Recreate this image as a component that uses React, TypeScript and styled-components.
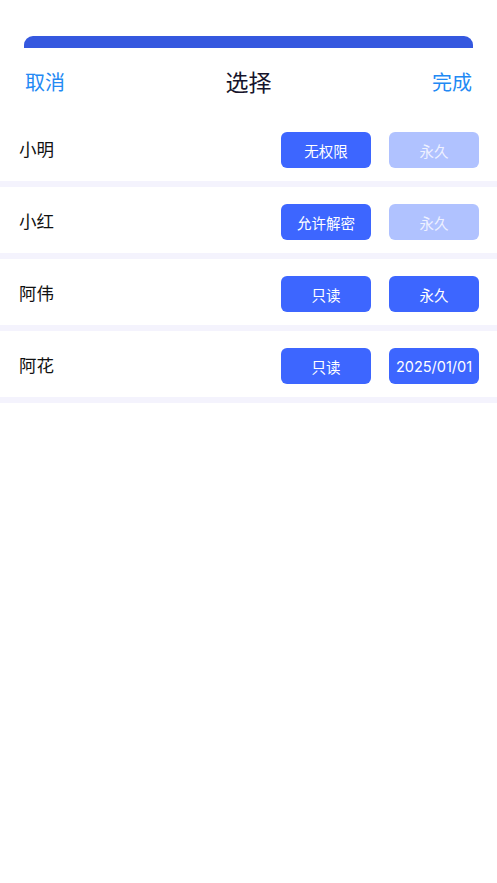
import React, { useState } from "react";
import styled, { createGlobalStyle } from "styled-components";

const GlobalStyle = createGlobalStyle`
  html, body {
    margin: 0;
    padding: 0;
    background: #ffffff;
    font-family: "Noto Sans CJK SC", "Noto Sans", "Liberation Sans", sans-serif;
  }
`;

const Page = styled.div`
  width: 100%;
  min-height: 883px;
  background: #ffffff;
  padding-top: 36px;
  box-sizing: border-box;
`;

const TopBar = styled.div`
  height: 12px;
  margin: 0 24px;
  background: #3558df;
  border-radius: 9px 9px 0 0;
`;

const Header = styled.div`
  display: flex;
  align-items: center;
  justify-content: space-between;
  height: 66px;
  padding: 0 25px;
  margin-bottom: 1px;
`;

const HeaderBtn = styled.button`
  border: none;
  background: none;
  padding: 0;
  font-family: inherit;
  font-size: 20px;
  font-weight: 400;
  color: #2289f4;
  cursor: pointer;
`;

const Title = styled.div`
  font-size: 23px;
  font-weight: 400;
  color: #16142b;
`;

const List = styled.div`
  display: flex;
  flex-direction: column;
`;

const Row = styled.div`
  display: flex;
  align-items: center;
  height: 72px;
  padding: 4px 18px 0 19px;
  box-sizing: border-box;
  border-bottom: 6px solid #f4f3fd;
  gap: 18px;
`;

const Name = styled.div`
  flex: 1;
  font-size: 17.5px;
  font-weight: 400;
  color: #111111;
  margin-top: -3px;
`;

const Pill = styled.button<{ $faded?: boolean }>`
  width: 90px;
  height: 36px;
  border: none;
  border-radius: 6px;
  background: ${(p) => (p.$faded ? "#b0c2ff" : "#3d66ff")};
  color: ${(p) => (p.$faded ? "#eef1ff" : "#ffffff")};
  font-family: "Inter", "Noto Sans CJK SC", sans-serif;
  font-size: 14.5px;
  font-weight: 400;
  padding: 0;
  cursor: pointer;
  white-space: nowrap;
`;

type Member = {
  name: string;
  role: string;
  expire: string;
  expireEnabled: boolean;
};

const members: Member[] = [
  { name: "小明", role: "无权限", expire: "永久", expireEnabled: false },
  { name: "小红", role: "允许解密", expire: "永久", expireEnabled: false },
  { name: "阿伟", role: "只读", expire: "永久", expireEnabled: true },
  { name: "阿花", role: "只读", expire: "2025/01/01", expireEnabled: true },
];

export default function App() {
  const [list] = useState<Member[]>(members);

  return (
    <>
      <GlobalStyle />
      <Page>
        <TopBar />
        <Header>
          <HeaderBtn>取消</HeaderBtn>
          <Title>选择</Title>
          <HeaderBtn>完成</HeaderBtn>
        </Header>
        <List>
          {list.map((m) => (
            <Row key={m.name}>
              <Name>{m.name}</Name>
              <Pill>{m.role}</Pill>
              <Pill $faded={!m.expireEnabled}>{m.expire}</Pill>
            </Row>
          ))}
        </List>
      </Page>
    </>
  );
}
